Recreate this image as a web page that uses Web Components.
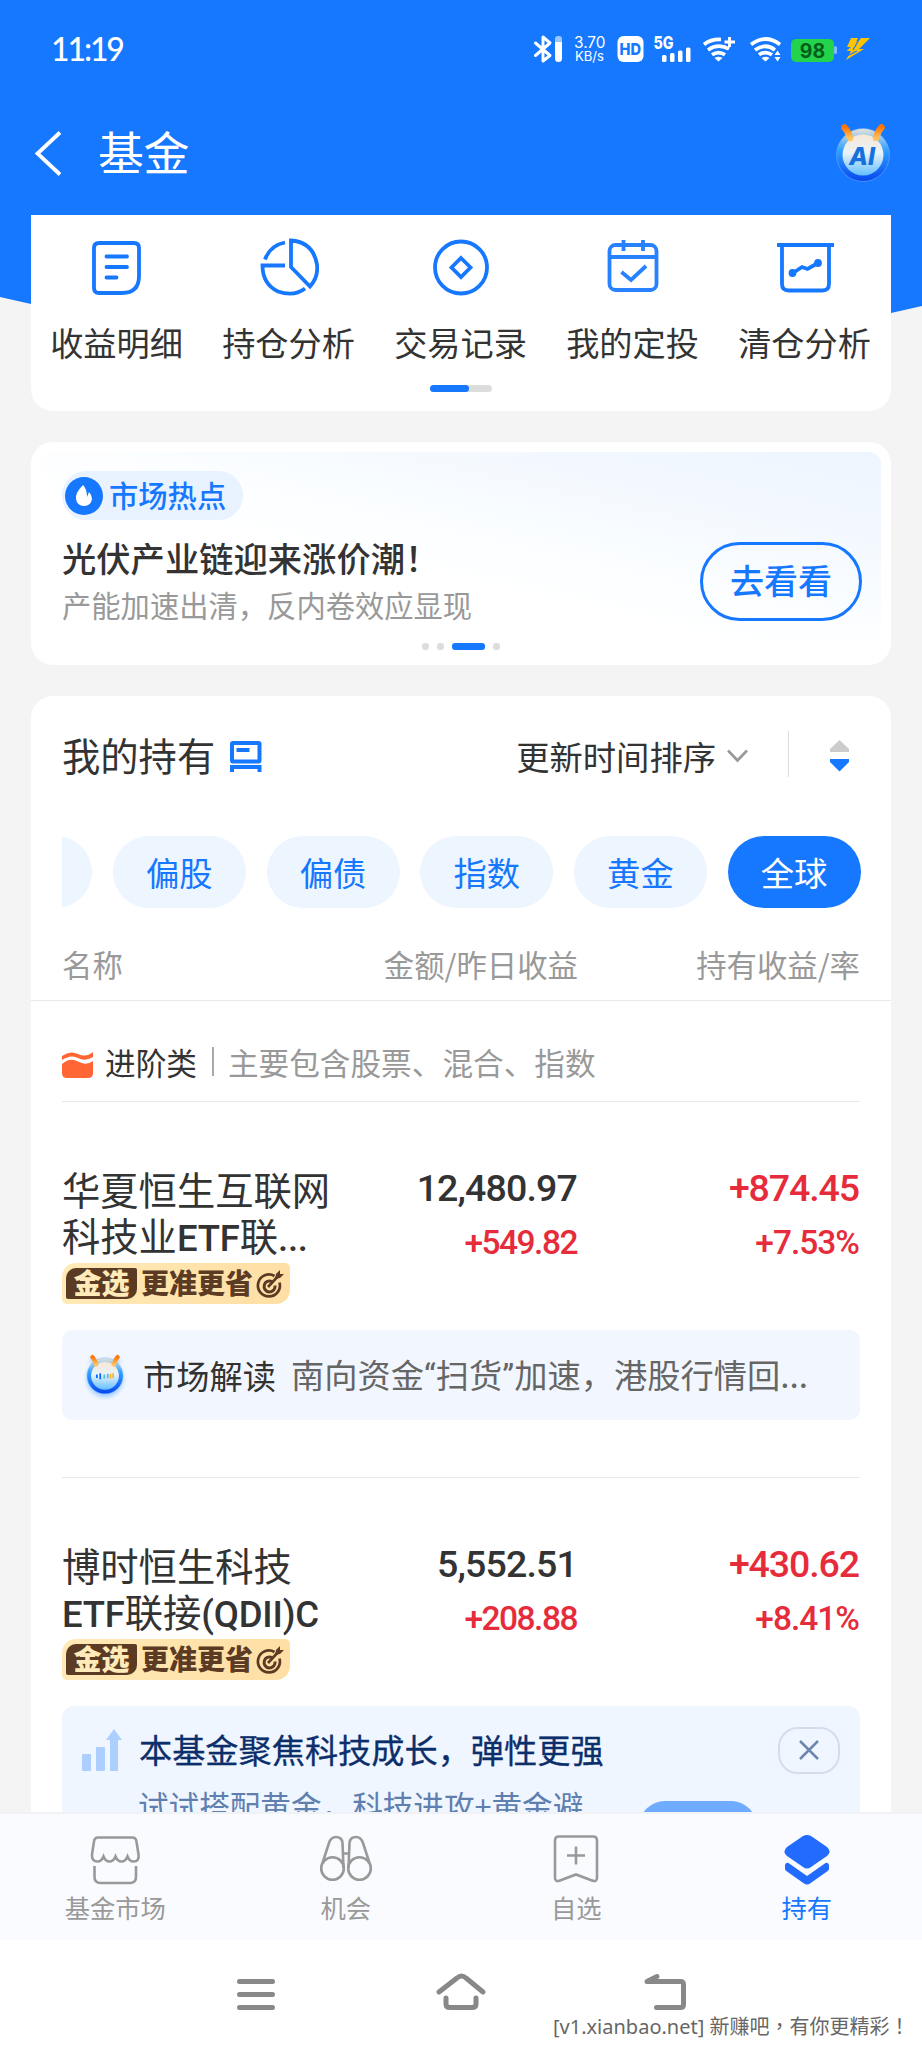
<!DOCTYPE html>
<html lang="zh-CN">
<head>
<meta charset="utf-8">
<title>基金</title>
<style>
html,body{margin:0;padding:0}
body{width:922px;height:2048px;overflow:hidden;background:#f4f4f4;font-family:"Noto Sans CJK SC","Noto Sans",sans-serif;color:#333;-webkit-font-smoothing:antialiased}
</style>
</head>
<body>
<fund-app></fund-app>
<script>
const define = (name, html) => {
  const tpl = document.createElement('template');
  tpl.innerHTML = '<style>*{box-sizing:border-box}:host{display:block;box-sizing:border-box}svg{display:block;flex:none}</style>' + html;
  customElements.define(name, class extends HTMLElement {
    constructor() {
      super();
      this.attachShadow({ mode: 'open' }).appendChild(tpl.content.cloneNode(true));
    }
  });
};

define('status-bar', `
<style>
:host{display:flex;height:98px;justify-content:space-between;align-items:flex-start;color:#fff;padding:32px 46px 0 51px}
.time{font:500 32px/34px Lato;letter-spacing:-2.1px;height:34px}
</style>
<span class="time">11:19</span>
<svg width="346" height="36" viewBox="530 32 346 36" fill="none" stroke="#fff">
  <path d="M535.500 43L550 55.500L543 61V37L550 43L535.500 55.500" stroke-width="3" stroke-linejoin="round" stroke-linecap="round"/>
  <rect x="555" y="36" width="7" height="9" rx="3" fill="#9cc6ff" stroke="none"/>
  <path d="M555 42h7v16.500a3.500 3.500 0 0 1-7 0z" fill="#fff" stroke="none"/>
  <g fill="#fff" stroke="none">
    <text x="574" y="48" font-family="Inter" font-size="15.500" textLength="31.500" lengthAdjust="spacingAndGlyphs">3.70</text>
    <text x="575" y="61.300" font-family="Inter" font-size="13.500" textLength="29" lengthAdjust="spacingAndGlyphs">KB/s</text>
    <rect x="617.500" y="36" width="26" height="26" rx="6"/>
    <text x="619.500" y="55" font-family="Inter" font-weight="800" font-size="16.500" fill="#1677ff" textLength="21.500" lengthAdjust="spacingAndGlyphs">HD</text>
    <text x="653.500" y="48.800" font-family="Inter" font-weight="800" font-size="17" textLength="20" lengthAdjust="spacingAndGlyphs">5G</text>
    <rect x="662" y="55" width="4.500" height="7" rx="1.500"/><rect x="670" y="53" width="4.500" height="9" rx="1.500"/>
    <rect x="678" y="50.500" width="4.500" height="11.500" rx="1.500"/><rect x="686" y="47.500" width="4.500" height="14.500" rx="1.500"/>
  </g>
  <g stroke-width="3.700">
    <path d="M704 44.500Q711 39 721 39.500M708 50q10-7 21-1M712 54.800q6.500-4.500 13 0"/>
    <path d="M729.500 37v10M724.500 42h10.500" stroke-width="3"/>
    <path d="M718.500 61.500l-4-3.500q4-2.500 8 0z" fill="#fff" stroke="none"/>
    <path d="M751 44.500q14.500-11 29 0M755 50q10.500-7.500 20 0M759 54.800q6.500-4.500 13 0"/>
    <path d="M765.500 61.500l-4-3.500q4-2.500 8 0zM777.500 50.500l3 4.500h-6zM777.500 61.500l3-4.500h-6z" fill="#fff" stroke="none"/>
  </g>
  <rect x="834" y="46" width="3" height="8" rx="1.500" fill="#81bbff" stroke="none"/>
  <rect x="791" y="39" width="43" height="23" rx="5" fill="#22d34b" stroke="none"/>
  <text x="812.500" y="57.500" font-family="Inter" font-weight="700" font-size="19.500" text-anchor="middle" fill="#075e1c" stroke="none">98</text>
  <path d="M851 38h7l-4 9h-7zM861 38h9l-11 11h5l-18 11 5-9h-4.500z" fill="#ffc400" stroke="none"/>
  <path d="M860 38l-7 12M847 56l10-5" stroke="#1677ff" stroke-width="1.200"/>
</svg>`);

define('ant-robot', `
<style>svg{width:100%;height:100%}:host([chat]) .ai,:host(:not([chat])) .bars{display:none}</style>
<svg viewBox="0 0 56 60" fill="none">
  <defs>
    <linearGradient id="ring" x1="0" y1="0" x2="0" y2="1"><stop offset="0" stop-color="#e7e4d9"/><stop offset=".4" stop-color="#31a2ff"/><stop offset="1" stop-color="#0646ef"/></linearGradient>
    <linearGradient id="face" x1="0" y1="0" x2="0" y2="1"><stop offset="0" stop-color="#f7e8d9"/><stop offset=".45" stop-color="#e9f2f8"/><stop offset="1" stop-color="#63bfff"/></linearGradient>
    <linearGradient id="horn" x1="0" y1="0" x2="0" y2="1"><stop offset="0" stop-color="#ff7607"/><stop offset="1" stop-color="#ffc25c"/></linearGradient>
  </defs>
  <circle cx="28" cy="32" r="26.500" fill="url(#ring)" stroke="#68adff" stroke-width=".6"/>
  <circle cx="28" cy="32" r="20.500" fill="url(#face)"/>
  <path d="M9.500 4.500Q13 8 15 15M46.500 4.500Q43 8 41 15" stroke="url(#horn)" stroke-width="6.500" stroke-linecap="round"/>
  <text class="ai" x="14" y="41.500" font-family="Inter" font-weight="800" font-style="italic" font-size="25" fill="#1671df" textLength="26" lengthAdjust="spacingAndGlyphs">AI</text>
  <g class="bars" stroke-width="2.500"><path d="M16 30v5M21 28v9" stroke="#0866f5"/><path d="M27 30v6M32 29v6" stroke="#50b8db"/><path d="M36 29v7M40 28v7" stroke="#ffae2d"/></g>
</svg>`);

define('nav-bar', `
<style>
:host{display:flex;height:117px;align-items:flex-start;color:#fff;padding:0 31px 0 34px}
.back{margin-top:33px}
h1{margin:19px 0 0 35px;font-weight:400;font-size:46px;line-height:66px;letter-spacing:-.6px;flex:1}
ant-robot{width:56px;height:60px;margin-top:25px}
</style>
<svg class="back" width="29" height="46" fill="none" stroke="#fff" stroke-width="3.800"><path d="M26 1.500L3.500 22.500L26 43.500"/></svg>
<h1><slot></slot></h1><ant-robot></ant-robot>`);

define('quick-entry', `
<style>
:host{width:172px;display:flex;flex-direction:column;align-items:center}
.l{font-size:33.200px;line-height:40px;margin:25px 1px 0 0;white-space:nowrap}
</style>
<slot name="icon"></slot><span class="l"><slot></slot></span>`);

define('quick-card', `
<style>
:host{background:#fff;height:196px;border-radius:0 0 22px 22px;padding-top:22px;position:relative}
.row{display:flex}
.pager{width:62px;height:7px;border-radius:4px;background:#ddd;margin:23px auto 0}
.pager i{display:block;width:39px;height:7px;border-radius:4px;background:#1677ff}
svg{stroke:#1677ff;fill:none;stroke-width:3.800}
</style>
<div class="row">
<quick-entry><svg slot="icon" width="60" height="60" viewBox="87 237 60 60"><path d="M99 243h35q5 0 5 5v28q0 17-17 17h-23q-5 0-5-5v-40q0-5 5-5z"/><path d="M106.500 256.500h20.500M106.500 267h20.500M106.500 277.500h10" stroke-linecap="round"/></svg>收益明细</quick-entry>
<quick-entry><svg slot="icon" width="60" height="60" viewBox="259 237 60 60"><path d="M285 242.500Q270 245.500 265 259.500M285 265.500H262.500Q262.500 284 278 291.500Q294 297 305 288.500"/><path d="M291 240.500v26.500l19 19.500Q318.500 277 317 264.500Q313 242 291 240.500z"/></svg>持仓分析</quick-entry>
<quick-entry><svg slot="icon" width="60" height="60" viewBox="431 237 60 60"><circle cx="461" cy="267.500" r="26"/><path d="M461 258l9.500 9.500-9.500 9.500-9.500-9.500z"/></svg>交易记录</quick-entry>
<quick-entry><svg slot="icon" width="60" height="60" viewBox="603 237 60 60" opacity=".92"><rect x="609.500" y="245" width="47" height="45" rx="6"/><path d="M610 257h46M623.500 240v11M643 240v11M621.500 272l9.500 8 15-14"/></svg>我的定投</quick-entry>
<quick-entry><svg slot="icon" width="60" height="60" viewBox="775 237 60 60"><path d="M777 245h57M782 246v38q0 6.500 6.500 6.500h34q6.500 0 6.500-6.500v-38"/><path d="M793 273l9-6 5.500 2 10.500-6"/><circle cx="792.500" cy="273" r="2"/><circle cx="818" cy="263" r="2"/></svg>清仓分析</quick-entry>
</div>
<div class="pager"><i></i></div>`);

define('news-card', `
<style>
:host{background:#fff;height:223px;border-radius:22px;margin-top:31px;padding:10px 10px 0;position:relative}
.in{height:190px;border-radius:12px;padding:19px 19px 0 21px;display:flex;justify-content:space-between;background:linear-gradient(to bottom left,#edf5ff 0%,#f4f9ff 25%,#fcfeff 48%,#fff 62%)}
.tag{display:flex;align-items:center;width:181px;height:49px;border-radius:25px;background:#e9f2ff;padding-left:3px;color:#1677ff;font-weight:500;font-size:29.300px;line-height:40px}
.tag b{font-weight:500;margin:-4px 0 0 6px}
h3{margin:15px 0 0;font-size:34.300px;line-height:44px;font-weight:500;color:#333;height:44px;white-space:nowrap}
p{margin:6px 0 0;font-size:29.300px;line-height:38px;color:#999;white-space:nowrap}
button{margin:71px 0 0;font:500 34px/40px "Noto Sans CJK SC";color:#1677ff;border:3px solid #1677ff;background:none;border-radius:40px;width:162px;height:79px;padding:0 0 3px}
.dots{display:flex;gap:8px;justify-content:center;margin-top:1px}
.dots i{width:7px;height:7px;border-radius:3px;background:#ddd}.dots .on{width:33px;background:#1677ff}
</style>
<div class="in"><div>
<div class="tag"><svg width="38" height="38" viewBox="0 0 38 38"><circle cx="19" cy="19" r="19" fill="#1677ff"/><path d="M18 8q-8 8-7 14 1 7 8 7t8-7q0-4-3-7l-2 5q0-8-4-12z" fill="#fff"/></svg><b>市场热点</b></div>
<h3>光伏产业链迎来涨价潮！</h3><p>产能加速出清，反内卷效应显现</p></div>
<button>去看看</button></div>
<div class="dots"><i></i><i></i><i class="on"></i><i></i></div>`);

define('filter-chip', `
<style>
:host{flex:none;width:133px;height:72px;border-radius:36px;background:#edf5ff;color:#1677ff;font-size:33.300px;line-height:71px;text-align:center}
:host([on]){background:#1677ff;color:#fff}
</style><slot></slot>`);

define('gold-badge', `
<style>
:host{display:flex;align-items:center;width:228px;height:41px;border-radius:14px 5px 14px 5px;background:linear-gradient(90deg,#ffe9b5,#ffdfa5);padding-left:4px;color:#5b3b23}
b{font-weight:900;font-size:28px;line-height:31px;height:31px}
.a{width:71px;background:#5b3b23;color:#ffebba;border-radius:10px 2px 10px 2px;text-align:center}
.a,.b{display:flex;justify-content:center}.a span,.b span{margin-top:-1px}
.b{width:114px;margin-left:3px;white-space:nowrap}
svg{margin-left:1px}
</style>
<b class="a"><span>金选</span></b><b class="b"><span>更准更省</span></b>
<svg width="30" height="30" viewBox="0 0 30 30" fill="none" stroke="#5b3b23" stroke-width="2.700"><path d="M19.500 7A11 11 0 1 0 24.500 13.500"/><path d="M17 12.500a5.500 5.500 0 1 0 3 4" stroke-width="3"/><path d="M13 18L25 5"/><path d="M20 10l1-5 4-4v4h4l-4 4z" fill="#5b3b23" stroke="none"/></svg>`);

define('fund-row', `
<style>
:host{display:grid;grid-template-columns:300px 216px 282px;height:96px}
.n{font-size:38.300px;line-height:46.300px;white-space:pre-line}
.c{font-family:Roboto;font-weight:500;text-align:right;white-space:nowrap;padding-right:1px}
.m{display:block;font-size:37.500px;line-height:46px;height:46px;letter-spacing:-.85px;margin-top:-1px}
.s{display:block;font-size:33.500px;line-height:40px;margin-top:12px;color:#e62c3b;letter-spacing:-1.500px}
.r .m{color:#e62c3b;letter-spacing:-1.100px}.r .s{letter-spacing:-1px}
::slotted(em){font-style:normal;font-family:Roboto;font-weight:500;font-size:36.500px;letter-spacing:-.2px;line-height:30px}
</style>
<div class="n"><slot></slot></div>
<div class="c"><span class="m"><slot name="amount"></slot></span><span class="s"><slot name="day"></slot></span></div>
<div class="c r"><span class="m"><slot name="gain"></slot></span><span class="s"><slot name="rate"></slot></span></div>`);

define('market-insight', `
<style>
:host{display:flex;align-items:center;height:90px;width:798px;margin-top:26px;border-radius:10px;background:#f2f7ff;font-size:33.250px;line-height:44px;padding-left:24px;white-space:nowrap}
ant-robot{width:38px;height:41px;margin:-2px 19px 0 0;filter:drop-shadow(0 3px 2px #9dccff)}
.t{margin-top:0}.d{color:#666;margin:0 0 0 15px}
</style><ant-robot chat></ant-robot><span class="t"><slot name="title"></slot></span><span class="d"><slot></slot></span>`);

define('growth-banner', `
<style>
:host{height:170px;width:798px;margin-top:26px;border-radius:12px;background:#f0f6ff;padding:20px 20px 0 20px}
.top{display:flex;height:48px;align-items:center}
h4{margin:-3px auto 0 16px;font-weight:400;font-size:33.200px;line-height:44px;color:#0c2f6b;white-space:nowrap;-webkit-text-stroke:.3px #0c2f6b}
.x{width:62px;height:47px;border:2px solid #d3deed;border-radius:20px;display:grid;place-items:center}
.sub{display:flex;color:#5f7faf;font-size:30.600px;line-height:42px;padding-left:56px;margin-top:10px;white-space:nowrap}
.sub i{width:118px;height:52px;border-radius:26px;background:#6facff;margin:17px 0 0 56px}
</style>
<div class="top"><svg width="41" height="42" viewBox="0 0 41 42" fill="#adcfff"><rect x="0" y="25" width="9" height="17" rx="1"/><rect x="14" y="18" width="9" height="24" rx="1"/><path d="M28 42V11h-4L32 0l8 11h-4v31z"/></svg>
<h4><slot></slot></h4><span class="x"><svg width="22" height="22" stroke="#6c87ad" stroke-width="2.500"><path d="M2 2l18 18M20 2L2 20"/></svg></span></div>
<div class="sub"><slot name="sub"></slot><i></i></div>`);

define('holdings-card', `
<style>
:host{background:#fff;height:1200px;border-radius:22px 22px 0 0;margin-top:31px}
.head{height:140px;display:flex;padding:35px 41px 0 31px;align-items:flex-start}
h2{margin:0;font-size:38.300px;line-height:48px;font-weight:400;margin-right:15px}
.sort{font-size:33.300px;line-height:46px;margin:2px 11px 0 auto}
.bar{width:1px;height:46px;background:#ddd;margin:0 41px 0 40px}
.chips{display:flex;gap:20.700px;justify-content:flex-end;overflow:hidden;width:798.600px;margin-left:31px}
.cols{display:grid;grid-template-columns:300px 216px 282px;font-size:30.400px;line-height:40px;color:#999;padding:36px 31px 0;height:93px;border-bottom:1px solid #e9e9e9}
.cols *+*{text-align:right}
.body{padding:0 31px}
.sec{display:flex;height:101px;border-bottom:1px solid #e9e9e9;width:798px;align-items:flex-start;padding-top:40px;font-size:30.650px;line-height:42px;white-space:nowrap}
.sec i{width:2px;height:29px;background:#aaa;margin:6px 14px 0 15px}
.sec span{color:#999}
fund-row{margin-top:64px}
gold-badge{margin-top:1px}
hr{border:0;height:1px;background:#e9e9e9;margin:57px 0 0;width:798px}
hr+fund-row{margin-top:64px}
.q{font-family:Roboto}
</style>
<div class="head"><h2>我的持有</h2>
<svg style="margin-top:10px" width="32" height="32" fill="none" stroke="#1677ff" stroke-width="4"><rect x="2" y="2" width="27.500" height="18.500" rx="1"/><path d="M6.500 9h13"/><path d="M2 31v-5h27.500V31"/></svg>
<span class="sort">更新时间排序</span>
<svg style="margin-top:18px" width="21" height="14" fill="none" stroke="#999" stroke-width="2.600"><path d="M1 1.500L10.500 11.500L20 1.500"/></svg>
<i class="bar"></i>
<svg style="margin-top:9px" width="20" height="32"><path d="M9.500 0L19 9v3H0V9z" fill="#ccc"/><path d="M0 19h19v3l-9.500 9.500L0 22z" fill="#1677ff"/></svg></div>
<div class="chips"><filter-chip></filter-chip><filter-chip>偏股</filter-chip><filter-chip>偏债</filter-chip><filter-chip>指数</filter-chip><filter-chip>黄金</filter-chip><filter-chip on>全球</filter-chip></div>
<div class="cols"><span>名称</span><span>金额/昨日收益</span><span>持有收益/率</span></div>
<div class="body">
<div class="sec"><svg style="margin:10px 12px 0 0" width="31" height="28" fill="#ff6633"><path d="M0 5Q8-1 16 3t15-2v5q-8 5-15 1T0 9z"/><path d="M0 13Q8 6 16 10.500t15-.5v12q0 5-5 5H5q-5 0-5-5z"/></svg>进阶类<i></i><span>主要包含股票、混合、指数</span></div>
<fund-row>华夏恒生互联网<br>科技业<em>ETF</em>联<em>...</em><span slot="amount">12,480.97</span><span slot="day">+549.82</span><span slot="gain">+874.45</span><span slot="rate">+7.53%</span></fund-row>
<gold-badge></gold-badge>
<market-insight><span slot="title">市场解读</span>南向资金<span class="q">“</span>扫货<span class="q">”</span>加速，港股行情回...</market-insight>
<hr>
<fund-row>博时恒生科技<br><em>ETF</em>联接<em>(QDII)C</em><span slot="amount">5,552.51</span><span slot="day">+208.88</span><span slot="gain">+430.62</span><span slot="rate">+8.41%</span></fund-row>
<gold-badge></gold-badge>
<growth-banner>本基金聚焦科技成长，弹性更强<span slot="sub">试试搭配黄金，科技进攻+黄金避</span></growth-banner>
</div>`);

define('tab-item', `
<style>
:host{flex:1;display:flex;flex-direction:column;align-items:center;font-size:25.300px;line-height:34px;color:#999;padding-top:20px}
:host([on]){color:#1677ff}
span{margin-top:2px}
</style><slot name="icon"></slot><span><slot></slot></span>`);

define('tab-bar', `
<style>
:host{display:flex;height:128px;background:#f9fbff;border-top:2px solid #f1f2f5;flex:none}
svg{fill:none;stroke:#999;stroke-width:2.600}
</style>
<tab-item><svg slot="icon" width="54" height="54" viewBox="88 1834 54 54"><path d="M98 1837.500h34q4 0 4.500 4l2 13q1 7-5 7-4 0-6-5-2 5-6 5t-6-5q-2 5-6 5t-6-5q-2 5-6 5-6 0-5.500-7l2-13q.5-4 4-4zM94.500 1866v11q0 6 6 6h29.500q6 0 6-6v-11"/></svg>基金市场</tab-item>
<tab-item><svg slot="icon" width="54" height="54" viewBox="319 1834 54 54"><circle cx="332.500" cy="1868.500" r="11.300"/><circle cx="359.500" cy="1868.500" r="11.300"/><path d="M322.500 1863l6.500-20q2-6 7-6 6 0 6.500 6l1 25M369.500 1863l-6.500-20q-2-6-7-6-6 0-6.500 6l-1 25M343.500 1853.500h5"/></svg>机会</tab-item>
<tab-item><svg slot="icon" width="54" height="54" viewBox="549 1834 54 54"><path d="M559 1836.500h34q4 0 4 4v37q0 5-5 3l-16-6-16 6q-5 2-5-3v-37q0-4 4-4zM567 1855.500h18M576 1846.500v18"/></svg>自选</tab-item>
<tab-item on><svg slot="icon" width="54" height="54" viewBox="780 1834 54 54" style="fill:#236bff;stroke:none"><path d="M803 1836q4-2 8 0l16 11q5 4.500 0 9l-16 11q-4 3-8 0l-16-11q-5-4.500 0-9z"/><path d="M785 1865q1-3 3.500-2l18.500 13 18.500-13q2.500-1 3.500 2v4q0 1-2 2.500l-17 12q-3 2-6 0l-17-12q-2-1.500-2-2.500z"/></svg>持有</tab-item>`);

define('system-nav', `
<style>
:host{height:108px;background:#fff;flex:none;padding-top:30px;position:relative}
svg{margin:0 auto;fill:none;stroke:#888;stroke-width:5;stroke-linecap:round;stroke-linejoin:round}
.wm{position:absolute;left:553px;top:70px;font:20px/32px "Noto Sans","Noto Sans CJK SC",sans-serif;color:#666;white-space:nowrap}
.wm span{font-family:"Noto Sans CJK TC"}
</style>
<svg width="460" height="42" viewBox="231 1970 460 42"><path d="M239.500 1981.500h33M239.500 1994.500h33M239.500 2007.500h33M439 1992l18-14q4.500-4 9 0l17 14M446 1998v6q0 3.500 4 3.500h22q4 0 4-3.500v-6M656.500 2007.500h24q3 0 3-3v-20q0-3-3-3h-33.500l10-5"/></svg>
<div class="wm">[v1.xianbao.net] 新赚吧<span lang="zh-TW">，</span>有你更精彩<span lang="zh-TW">！</span></div>`);

define('fund-app', `
<style>
:host{display:flex;flex-direction:column;width:922px;height:2048px}
.bg{background:#1677ff;flex:none}
main{flex:1;min-height:0;overflow:hidden;padding:0 31px;position:relative}
.curve{position:absolute;left:0;top:0}
</style>
<div class="bg"><status-bar></status-bar><nav-bar>基金</nav-bar></div>
<main><svg class="curve" width="922" height="110"><path d="M0 0H922V91L891 98Q460 190 31 89L0 82z" fill="#1677ff"/></svg>
<quick-card></quick-card><news-card></news-card><holdings-card></holdings-card></main>
<tab-bar></tab-bar><system-nav></system-nav>`);
</script>
</body>
</html>
